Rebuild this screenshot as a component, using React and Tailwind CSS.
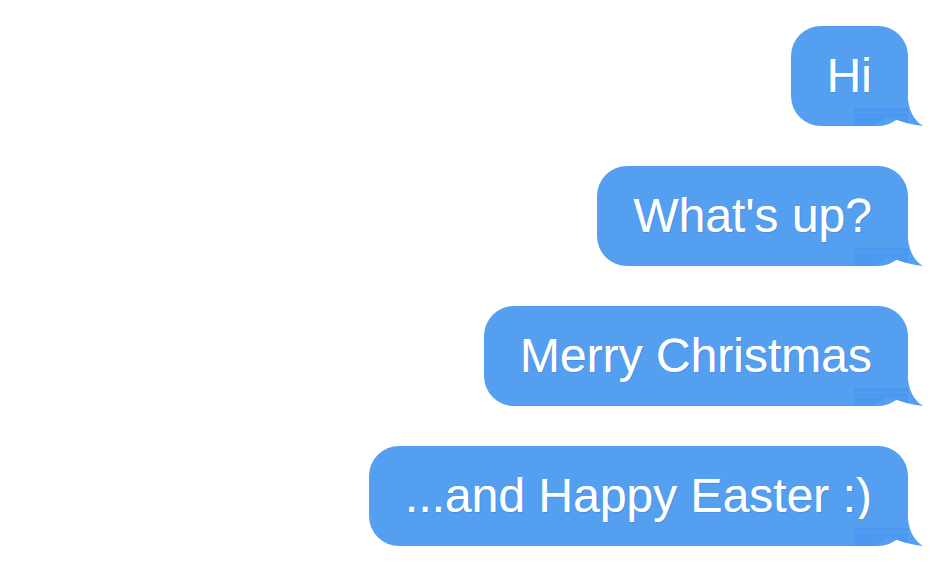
import { useId } from "react";

const messages = ["Hi", "What's up?", "Merry Christmas", "...and Happy Easter :)"];

const Tail = () => {
  const id = useId().replace(/:/g, "");
  return (
    <svg
      className="absolute right-[-18px] bottom-[-1px] w-[76px] h-[28px]"
      viewBox="0 0 76 28"
    >
      <defs>
        <clipPath id={`tail-${id}`}>
          <path d="M58 0 Q60 19 73 27 Q55 25 38 17 Q30 24 20 27 L0 27 L0 0 Z" />
        </clipPath>
      </defs>
      <path
        d="M58 0 Q60 19 73 27 Q55 25 38 17 Q30 24 20 27 L0 27 L0 0 Z"
        fill="#559ff1"
      />
      <g clipPath={`url(#tail-${id})`}>
        <rect x="4" y="9" width="54" height="18" fill="#4b98f0" />
        <rect x="4" y="13" width="54" height="1" fill="#549ef2" />
        <rect x="4" y="18" width="54" height="1" fill="#4e9af1" />
      </g>
    </svg>
  );
};

const Bubble = ({ text }) => {
  return (
    <div className="relative">
      <div className="relative z-10 bg-[#559ff1] rounded-[30px] px-9 py-[26px] text-white text-[48px] leading-[48px] whitespace-nowrap [text-shadow:1px_1px_0_#4a8fe2,0_0_0.5px_#ffffff]">
        {text}
      </div>
      <div className="absolute inset-0 z-20 pointer-events-none">
        <Tail />
      </div>
    </div>
  );
};

export default function App() {
  return (
    <div
      className="min-h-screen w-full bg-white flex flex-col items-end gap-10 pt-[26px] pr-[42px]"
      style={{ fontFamily: '"Liberation Sans", Arial, sans-serif' }}
    >
      {messages.map((m) => (
        <Bubble key={m} text={m} />
      ))}
    </div>
  );
}
